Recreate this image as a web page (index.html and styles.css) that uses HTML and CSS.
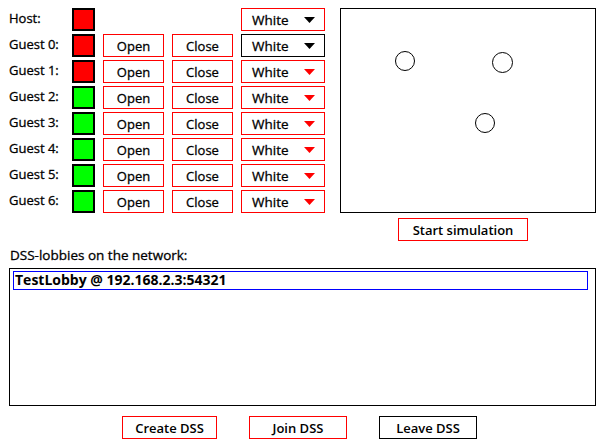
FILE: index.html
```html
<!DOCTYPE html>
<html>
<head>
<meta charset="utf-8">
<link rel="stylesheet" href="styles.css">
</head>
<body>
<div class="app">
  <div class="top">
    <div class="players">
      <div class="label">Host:</div>
      <div class="swatch red"></div>
      <div class="empty"></div>
      <div class="empty"></div>
      <div class="dropdown"><span>White</span><svg class="tri" width="11" height="6" viewBox="0 0 11 6"><polygon points="0,0 11,0 5.5,6" fill="#000"/></svg></div>

      <div class="label">Guest 0:</div>
      <div class="swatch red"></div>
      <div class="btn">Open</div>
      <div class="btn">Close</div>
      <div class="dropdown dark"><span>White</span><svg class="tri" width="11" height="6" viewBox="0 0 11 6"><polygon points="0,0 11,0 5.5,6" fill="#000"/></svg></div>

      <div class="label">Guest 1:</div>
      <div class="swatch red"></div>
      <div class="btn">Open</div>
      <div class="btn">Close</div>
      <div class="dropdown"><span>White</span><svg class="tri" width="11" height="6" viewBox="0 0 11 6"><polygon points="0,0 11,0 5.5,6" fill="#f00"/></svg></div>

      <div class="label">Guest 2:</div>
      <div class="swatch green"></div>
      <div class="btn">Open</div>
      <div class="btn">Close</div>
      <div class="dropdown"><span>White</span><svg class="tri" width="11" height="6" viewBox="0 0 11 6"><polygon points="0,0 11,0 5.5,6" fill="#f00"/></svg></div>

      <div class="label">Guest 3:</div>
      <div class="swatch green"></div>
      <div class="btn">Open</div>
      <div class="btn">Close</div>
      <div class="dropdown"><span>White</span><svg class="tri" width="11" height="6" viewBox="0 0 11 6"><polygon points="0,0 11,0 5.5,6" fill="#f00"/></svg></div>

      <div class="label">Guest 4:</div>
      <div class="swatch green"></div>
      <div class="btn">Open</div>
      <div class="btn">Close</div>
      <div class="dropdown"><span>White</span><svg class="tri" width="11" height="6" viewBox="0 0 11 6"><polygon points="0,0 11,0 5.5,6" fill="#f00"/></svg></div>

      <div class="label">Guest 5:</div>
      <div class="swatch green"></div>
      <div class="btn">Open</div>
      <div class="btn">Close</div>
      <div class="dropdown"><span>White</span><svg class="tri" width="11" height="6" viewBox="0 0 11 6"><polygon points="0,0 11,0 5.5,6" fill="#f00"/></svg></div>

      <div class="label">Guest 6:</div>
      <div class="swatch green"></div>
      <div class="btn">Open</div>
      <div class="btn">Close</div>
      <div class="dropdown"><span>White</span><svg class="tri" width="11" height="6" viewBox="0 0 11 6"><polygon points="0,0 11,0 5.5,6" fill="#f00"/></svg></div>
    </div>
    <div class="sim">
      <div class="canvas">
        <svg width="254" height="203" viewBox="0 0 254 203">
          <circle cx="64" cy="52" r="9.5" fill="none" stroke="#000" stroke-width="1"/>
          <circle cx="161.5" cy="53.5" r="10" fill="none" stroke="#000" stroke-width="1"/>
          <circle cx="144" cy="114" r="9.5" fill="none" stroke="#000" stroke-width="1"/>
        </svg>
      </div>
      <div class="btn start">Start simulation</div>
    </div>
  </div>
  <div class="lobby-label">DSS-lobbies on the network:</div>
  <div class="listbox">
    <div class="item">TestLobby @ 192.168.2.3:54321</div>
  </div>
  <div class="actions">
    <div class="btn action create">Create DSS</div>
    <div class="btn action join">Join DSS</div>
    <div class="btn action leave">Leave DSS</div>
  </div>
</div>
</body>
</html>
```
FILE: styles.css
```css
html, body {
  margin: 0;
  padding: 0;
  background: #fff;
}
body {
  font-family: "Open Sans", "Noto Sans", sans-serif;
  font-size: 13px;
  font-weight: 400;
  color: #000;
  -webkit-text-stroke: 0.3px #000;
}
.app {
  padding: 8px 0 0 9px;
}
.top {
  display: flex;
  gap: 15px;
}
.players {
  display: grid;
  grid-template-columns: 55px 23px 61px 61px 84px;
  grid-auto-rows: 23px;
  column-gap: 8px;
  row-gap: 3px;
  align-items: center;
}
.label {
  line-height: 21px;
  align-self: start;
}
.swatch {
  width: 23px;
  height: 23px;
  box-sizing: border-box;
  border: 2px solid #000;
}
.red { background: #ff0000; }
.green { background: #00ff00; }
.btn {
  box-sizing: border-box;
  height: 23px;
  border: 1px solid #ff0000;
  display: flex;
  align-items: center;
  justify-content: center;
}
.dropdown {
  box-sizing: border-box;
  height: 23px;
  border: 1px solid #ff0000;
  display: flex;
  align-items: center;
  justify-content: space-between;
  padding: 0 9px 0 10px;
  font-size: 13.5px;
}
.dropdown.dark {
  border-color: #000;
}
.tri {
  display: block;
}
.sim {
  display: flex;
  flex-direction: column;
}
.canvas {
  width: 256px;
  height: 205px;
  box-sizing: border-box;
  border: 1px solid #000;
}
.canvas svg {
  display: block;
}
.start {
  width: 130px;
  margin: 5px 0 0 58px;
  font-weight: 600;
  -webkit-text-stroke: 0;
}
.lobby-label {
  margin-top: 4px;
  padding-left: 1px;
  line-height: 20px;
  font-size: 13.5px;
}
.listbox {
  margin-top: 3px;
  width: 587px;
  height: 138px;
  box-sizing: border-box;
  border: 1px solid #000;
  padding: 2px 0 0 3px;
}
.item {
  width: 575px;
  height: 19px;
  box-sizing: border-box;
  border: 1px solid #0000ff;
  font-weight: 700;
  font-size: 14px;
  line-height: 16px;
  padding-left: 1px;
  -webkit-text-stroke: 0;
}
.actions {
  display: flex;
  margin-top: 10px;
  padding-left: 113px;
}
.action {
  font-weight: 600;
  -webkit-text-stroke: 0;
}
.create { width: 95px; }
.join { width: 98px; margin-left: 32px; }
.leave { width: 98px; margin-left: 32px; border-color: #000; }
```
